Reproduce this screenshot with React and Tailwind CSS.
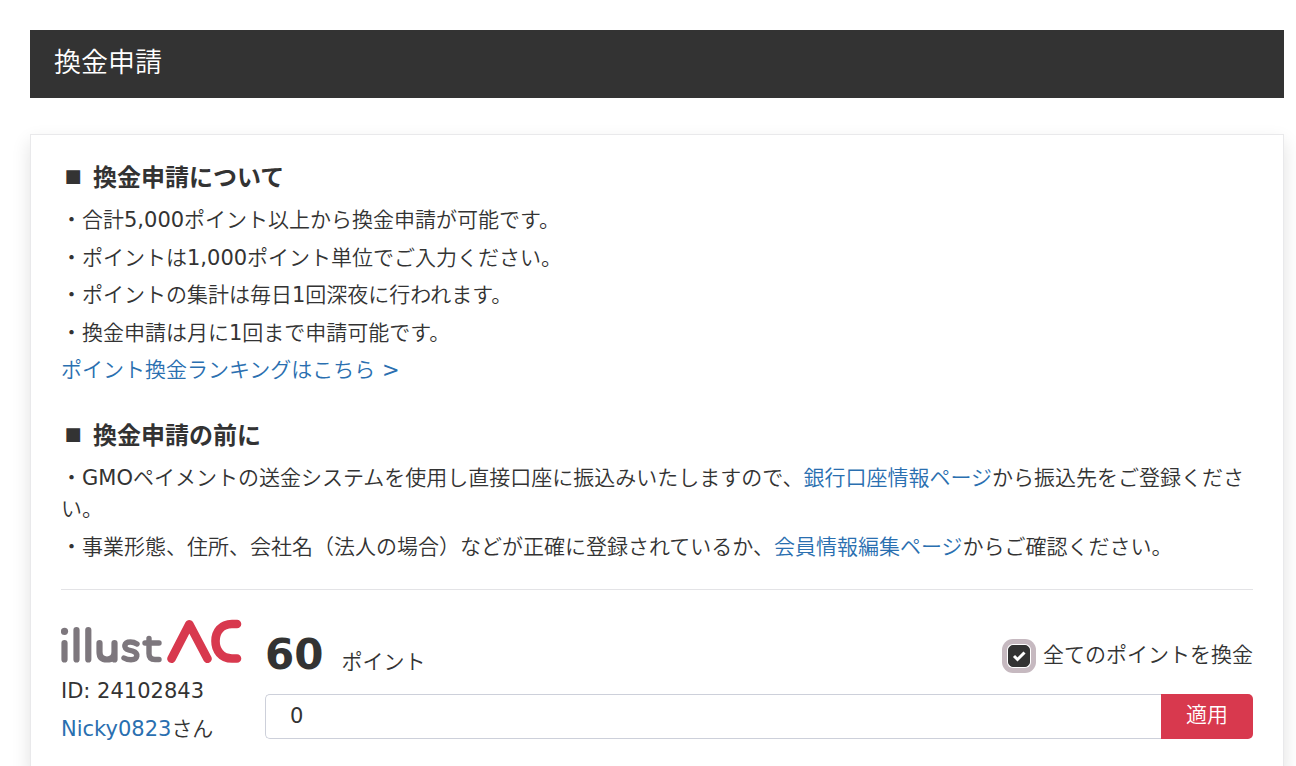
import { useState } from "react";

function SectionTitle({ children }) {
  return (
    <h2 className="mb-[9px] flex items-start gap-2 font-['DejaVu_Sans','Noto_Sans_CJK_JP',sans-serif] text-2xl leading-9 font-bold">
      <span className="w-6 text-center text-lg leading-8">■</span>
      {children}
    </h2>
  );
}

function TextLink({ children }) {
  return (
    <a href="#" className="text-[#2a6fb0] hover:underline">
      {children}
    </a>
  );
}

function Logo() {
  return (
    <svg
      role="img"
      aria-label="illustAC"
      viewBox="0 0 182 46"
      className="h-[46px] w-[182px]"
      fill="none"
      strokeLinecap="round"
      strokeLinejoin="round"
    >
      <g stroke="#7d777d" strokeWidth="6.200">
        <path d="M3.500 25V41.500M15.500 12V41.500M27.300 12V41.500" />
        <path d="M38.500 25V34Q38.500 41.500 46 41.500Q53.500 41.500 53.500 34M53.500 25V41.500" />
        <path d="M76 26Q73 24 69.500 24C62.500 24 62 30.500 67.500 32L71.500 33C78 35 77 41.800 70 41.800Q66 41.800 63 40" strokeWidth="5.400" />
        <path d="M88 20.500V35.500Q88 41.500 94 41.500H98M84 25H98" strokeWidth="5.400" />
      </g>
      <circle cx="3.500" cy="13.300" r="3.600" fill="#7d777d" />
      <g stroke="#d8394e" strokeWidth="8.600">
        <path d="M110.500 40.800L128.300 6.300L146.500 40.800" />
        <path d="M176 6H171C160 6 154.500 14 154.500 23C154.500 32 160 40.500 171 40.500H176" />
      </g>
    </svg>
  );
}

export default function App() {
  const [all, setAll] = useState(true);
  const [points, setPoints] = useState("0");

  return (
    <div className="flex min-h-screen flex-col bg-white pt-[30px] pr-3 pl-[30px] font-['DejaVu_Sans','Noto_Sans_CJK_JP_DemiLight','Noto_Sans_CJK_JP',sans-serif] text-[21px] leading-normal text-[#333]" lang="ja">
      <header className="bg-[#333] px-6 pt-[13px] pb-[15px] text-white">
        <h1 className="text-[27px] leading-10 font-normal">換金申請</h1>
      </header>

      <main className="mt-9 flex-1 border border-b-0 border-[#e9e9eb] px-[30px] pt-[25px] pb-[27px] shadow-[0_8px_18px_rgba(0,0,0,0.12)]">
        <section>
          <SectionTitle>換金申請について</SectionTitle>
          <ul className="flex flex-col gap-1.5">
            <li>・合計5,000ポイント以上から換金申請が可能です。</li>
            <li>・ポイントは1,000ポイント単位でご入力ください。</li>
            <li>・ポイントの集計は毎日1回深夜に行われます。</li>
            <li>・換金申請は月に1回まで申請可能です。</li>
            <li>
              <TextLink>ポイント換金ランキングはこちら &gt;</TextLink>
            </li>
          </ul>
        </section>

        <section className="mt-[31px]">
          <SectionTitle>換金申請の前に</SectionTitle>
          <ul className="flex flex-col gap-1.5">
            <li>
              ・GMOペイメントの送金システムを使用し直接口座に振込みいたしますので、
              <TextLink>銀行口座情報ページ</TextLink>
              から振込先をご登録ください。
            </li>
            <li>
              ・事業形態、住所、会社名（法人の場合）などが正確に登録されているか、
              <TextLink>会員情報編集ページ</TextLink>
              からご確認ください。
            </li>
          </ul>
        </section>

        <hr className="mt-[26px] border-[#e3e3e6]" />

        <section className="flex gap-[22px] pt-7">
          <div className="w-[182px] shrink-0">
            <Logo />
            <p className="mt-3">ID: 24102843</p>
            <p className="mt-1.5">
              <TextLink>Nicky0823</TextLink>さん
            </p>
          </div>

          <form className="flex min-w-0 flex-1 flex-col" onSubmit={(e) => e.preventDefault()}>
            <div className="flex h-[76px] items-center justify-between">
              <p className="flex items-baseline gap-[18px]">
                <strong className="text-[42px] leading-none font-bold">60</strong>
                <span>ポイント</span>
              </p>
              <label className="flex items-center gap-[13px]">
                <span className="grid size-[22px]">
                  <input
                    type="checkbox"
                    checked={all}
                    onChange={(e) => setAll(e.target.checked)}
                    className="col-start-1 row-start-1 size-[22px] appearance-none rounded-[5px] border border-[#333] bg-white shadow-[0_0_0_1px_#fff,0_0_0_6px_#c6b9c0] checked:bg-[#333]"
                  />
                  {all && (
                    <svg viewBox="0 0 22 22" className="pointer-events-none col-start-1 row-start-1 size-[22px]" fill="none" stroke="#fff" strokeWidth="3">
                      <path d="M6 11L9.500 14.500L16.500 7.500" />
                    </svg>
                  )}
                </span>
                全てのポイントを換金
              </label>
            </div>
            <div className="flex h-[45px]">
              <input
                type="text"
                aria-label="ポイント"
                value={points}
                onChange={(e) => setPoints(e.target.value)}
                className="min-w-0 flex-1 rounded-l-[5px] border border-r-0 border-[#cdd0da] px-6 outline-none"
              />
              <button type="submit" className="w-[92px] rounded-r-[5px] bg-[#d8394e] pb-0.5 text-white">
                適用
              </button>
            </div>
          </form>
        </section>
      </main>
    </div>
  );
}
